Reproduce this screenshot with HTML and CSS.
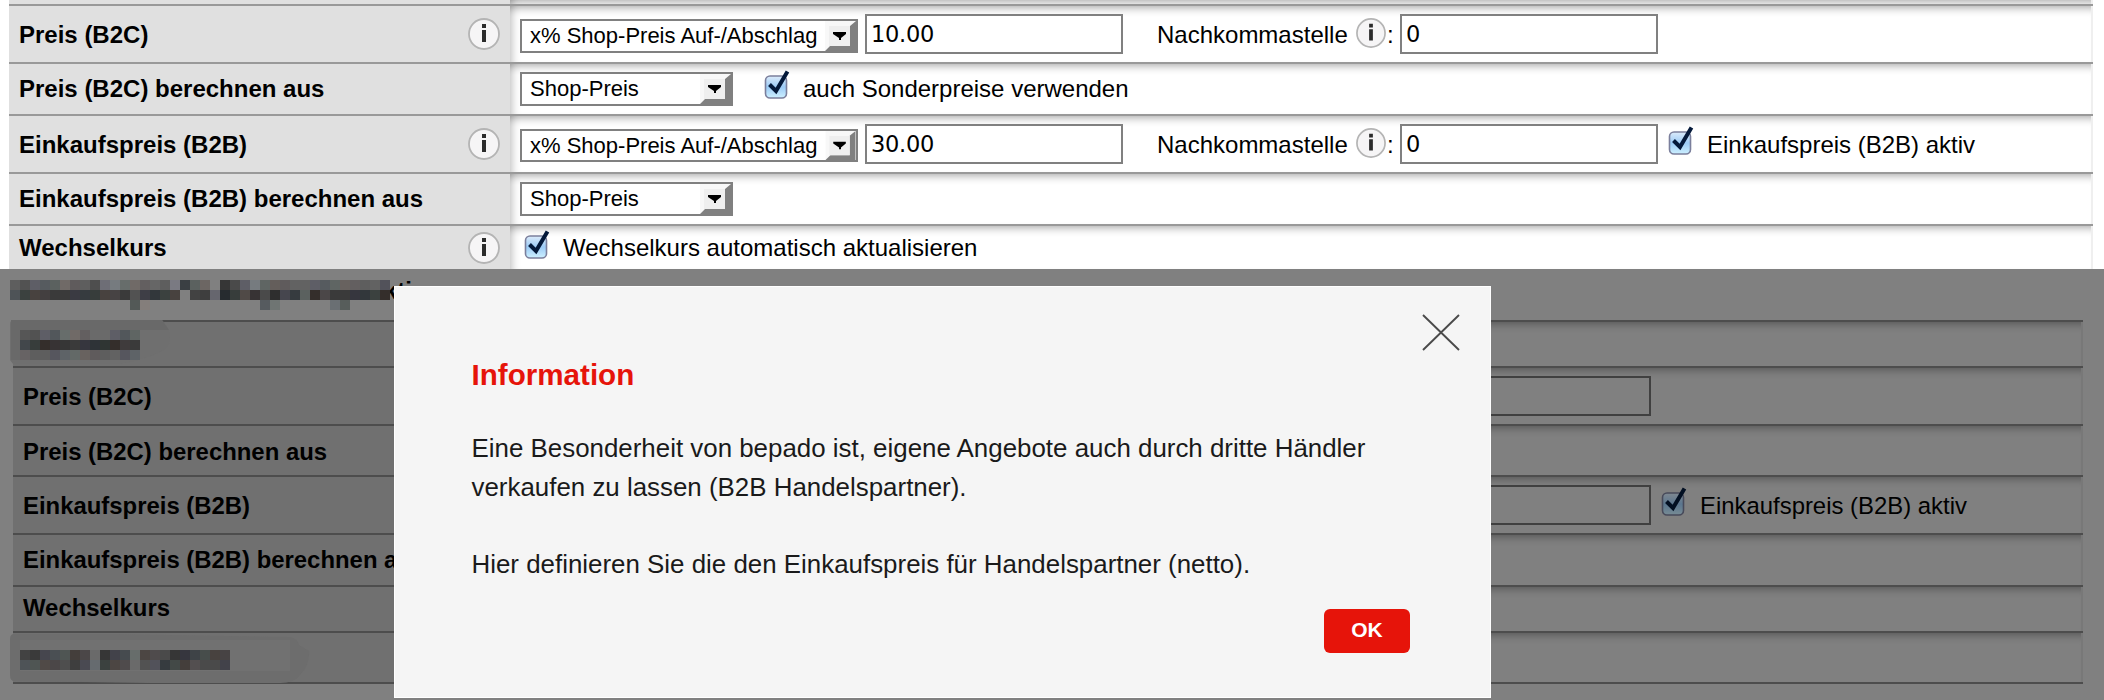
FILE: index.html
```html
<!DOCTYPE html>
<html lang="de">
<head>
<meta charset="utf-8">
<title>Preiseinstellungen</title>
<link rel="stylesheet" href="styles.css">
</head>
<body>
<svg class="defs" width="0" height="0">
  <defs>
    <linearGradient id="cb" x1="0" y1="0" x2="0" y2="1">
      <stop offset="0" stop-color="#dcebfa"/><stop offset=".5" stop-color="#9ccbf6"/><stop offset="1" stop-color="#cdf0ff"/>
    </linearGradient>
    <symbol id="check" viewBox="0 0 27 30">
      <rect x="2.500" y="6" width="21" height="22" rx="4.5" fill="url(#cb)" stroke="#7b7f9c" stroke-width="1.6"/>
      <path d="M6.500 14.500L13 21L24.500 1.500" fill="none" stroke="#04193a" stroke-width="4"/>
    </symbol>
    <symbol id="info" viewBox="0 0 32 32">
      <circle cx="16" cy="16" r="15" fill="#f6f5f6" stroke="#b4b4b4" stroke-width="1.8"/>
      <path d="M14 6h4v4h-4zM14 12h4v12h-4z" fill="#2b2b2b"/>
    </symbol>
    <symbol id="arrow" viewBox="0 0 31 30">
      <path d="M0 0H31L26 5H5V25L0 30Z" fill="#f8f8f8"/>
      <path d="M31 0V30H0L5 25H25V5Z" fill="#808080"/>
      <path d="M4 5H25V25H4Z" fill="#efefef"/>
      <path d="M8 11H21V13L16 17V19H14V17L8 13Z" fill="#000"/>
    </symbol>
  </defs>
</svg>
<main class="page">
  <section class="settings">
    <div class="row r0"><div class="label"></div><div class="cell"></div></div>
    <div class="row r1">
      <div class="label"><span>Preis (B2C)</span><svg class="info"><use href="#info"/></svg></div>
      <div class="cell">
        <div class="select wide"><span>x% Shop-Preis Auf-/Abschlag</span><svg class="arrow"><use href="#arrow"/></svg></div>
        <div class="input first">10.00</div>
        <span class="digits">Nachkommastelle</span><svg class="info cut"><use href="#info"/></svg><span class="colon">:</span>
        <div class="input">0</div>
      </div>
    </div>
    <div class="row r2">
      <div class="label"><span>Preis (B2C) berechnen aus</span></div>
      <div class="cell">
        <div class="select"><span>Shop-Preis</span><svg class="arrow"><use href="#arrow"/></svg></div>
        <svg class="check special"><use href="#check"/></svg><span class="text">auch Sonderpreise verwenden</span>
      </div>
    </div>
    <div class="row r3">
      <div class="label"><span>Einkaufspreis (B2B)</span><svg class="info"><use href="#info"/></svg></div>
      <div class="cell">
        <div class="select wide"><span>x% Shop-Preis Auf-/Abschlag</span><svg class="arrow"><use href="#arrow"/></svg></div>
        <div class="input first">30.00</div>
        <span class="digits">Nachkommastelle</span><svg class="info cut"><use href="#info"/></svg><span class="colon">:</span>
        <div class="input">0</div>
        <svg class="check active"><use href="#check"/></svg><span class="text">Einkaufspreis (B2B) aktiv</span>
      </div>
    </div>
    <div class="row r4">
      <div class="label"><span>Einkaufspreis (B2B) berechnen aus</span></div>
      <div class="cell">
        <div class="select"><span>Shop-Preis</span><svg class="arrow"><use href="#arrow"/></svg></div>
      </div>
    </div>
    <div class="row r5">
      <div class="label"><span>Wechselkurs</span><svg class="info"><use href="#info"/></svg></div>
      <div class="cell"><svg class="check rate"><use href="#check"/></svg><span class="text">Wechselkurs automatisch aktualisieren</span></div>
    </div>
  </section>

  <section class="dimmed">
    <div class="heading"><svg class="mosaic" id="m1" width="380" height="30"></svg><span>kti</span></div>
    <div class="table">
      <div class="row d0"><div class="label"><svg class="mosaic" id="m2" width="170" height="46"><path d="M0 4Q0 0 4 0H152Q164 14 158 26Q150 36 110 44H3L0 40Z" fill="#6f6f6f"/><path d="M1 0H152L159 10H10V40H1Z" fill="#696969"/></svg></div><div class="cell"></div></div>
      <div class="row d1"><div class="label">Preis (B2C)</div><div class="cell"><div class="input"></div></div></div>
      <div class="row d2"><div class="label">Preis (B2C) berechnen aus</div><div class="cell"></div></div>
      <div class="row d3"><div class="label">Einkaufspreis (B2B)</div><div class="cell"><div class="input"></div><svg class="check"><use href="#check"/></svg><span class="text">Einkaufspreis (B2B) aktiv</span></div></div>
      <div class="row d4"><div class="label">Einkaufspreis (B2B) berechnen aus</div><div class="cell"></div></div>
      <div class="row d5"><div class="label">Wechselkurs</div><div class="cell"></div></div>
      <div class="row d6"><div class="label"><svg class="mosaic" id="m3" width="300" height="52"><path d="M0 8Q0 3 4 3H100L280 6Q288 8 289 14L299 20Q300 34 290 44Q284 52 270 52H140L4 50Q0 50 0 44Z" fill="#6d6d6d"/><path d="M10 9H280V40H10Z" fill="#717171"/></svg></div><div class="cell"></div></div>
    </div>
  </section>

  <div class="modal">
    <svg class="close" viewBox="0 0 38 37"><path d="M1 1L37 36M37 1L1 36" stroke="#4a4a4a" stroke-width="1.900" fill="none"/></svg>
    <h2>Information</h2>
    <p>Eine Besonderheit von bepado ist, eigene Angebote auch durch dritte Händler<br>verkaufen zu lassen (B2B Handelspartner).</p>
    <p>Hier definieren Sie die den Einkaufspreis für Handelspartner (netto).</p>
    <button class="ok">OK</button>
  </div>
</main>
<script src="mosaic.js"></script>
</body>
</html>
```
FILE: styles.css
```css
* { box-sizing: border-box; }
body { margin: 0; font-family: "Liberation Sans", Arial, sans-serif; font-size: 24px; line-height: 28px; color: #000; background: #fff; }
.defs { position: absolute; }
.page { position: relative; width: 2104px; height: 700px; overflow: hidden; }
.settings { height: 269px; padding-left: 9px; }
.row { display: flex; }
.settings .row { width: 2084px; border-top: 2px solid #999; }
.settings .r0 { height: 4px; border-top: 0; }
.r1, .r3 { height: 58px; }
.r2, .r4 { height: 52px; }
.r5 { height: 45px; }
.label { width: 501px; flex: none; display: flex; align-items: flex-start; justify-content: space-between; padding: 15px 10px 0 10px; background: #e0e0e0; font-weight: bold; white-space: nowrap; }
.r2 .label, .r4 .label { padding-top: 11px; }
.r5 .label { padding-top: 8px; }
.r0 .label { padding: 0; }
.settings .label .info { margin-top: -3px; }
.settings .r5 .label .info { margin-top: -2px; }
.cell { flex: 1; display: flex; align-items: flex-start; padding-left: 10px; white-space: nowrap; box-shadow: inset 0 10px 9px -8px rgba(0,0,0,.33), inset 9px 0 8px -7px rgba(0,0,0,.25); border-right: 2px solid #efefef; }
.info { width: 32px; height: 32px; flex: none; display: block; }
.select { width: 213px; height: 34px; margin-top: 8px; border: 2px solid #808080; background: #fff; display: flex; justify-content: space-between; font-size: 22px; line-height: 30px; padding-left: 8px; }
.select.wide { width: 338px; margin-top: 13px; }
.select.wide span { line-height: 29px; }
.r3 .select.wide { height: 33px; }
.arrow { width: 31px; height: 30px; flex: none; margin-left: -12px; }
.r3 .select .arrow { height: 29px; }
.input { width: 258px; height: 40px; margin-top: 8px; border: 2px solid #808080; background: #fff; font: 22.500px/36px "DejaVu Sans", Verdana, sans-serif; letter-spacing: -.3px; padding-left: 4px; flex: none; }
.input.first { margin-left: 7px; }
.digits { margin: 15px 0 0 34px; width: 192px; }
.info.cut { height: 30px; margin-top: 12px; margin-left: 6px; overflow: hidden; }
.info.cut use { height: 32px; }
.colon { margin-top: 15px; width: 13px; }
.check { width: 27px; height: 30px; flex: none; }
.check.special { margin: 6px 0 0 30px; }
.r2 .text { margin: 11px 0 0 13px; }
.check.active { margin: 10px 0 0 9px; }
.r3 .text { margin: 15px 0 0 13px; }
.check.rate { margin: 4px 0 0 3px; }
.r5 .text { margin: 8px 0 0 13px; }

.dimmed { height: 431px; background: #808080; padding: 11px 0 0 10px; font-size: 23.900px; }
.heading { height: 40px; display: flex; font-weight: bold; }
.heading span { margin: -3px 0 0 -6px; }
.mosaic { display: block; flex: none; position: relative; }
.table { width: 2070px; margin-left: 3px; border-bottom: 2px solid #4d4d4d; height: 364px; }
.table .row { border-top: 2px solid #4d4d4d; }
.table .label { width: 501px; background: #707070; padding: 15px 10px 0; }
.table .cell { box-shadow: inset 0 10px 9px -8px rgba(0,0,0,.33); border-right: 2px solid #787878; padding-left: 0; }
.table .d0 { height: 46px; }
.table .d1 { height: 58px; }
.table .d2 { height: 51px; }
.table .d3 { height: 58px; }
.table .d4 { height: 52px; }
.table .d5 { height: 46px; }
.table .d6 { height: 51px; }
.table .d0 .label, .table .d6 .label { padding: 0; }
.table .d2 .label { padding-top: 12px; }
.table .d4 .label { padding-top: 11px; }
.table .d5 .label { padding-top: 7px; }
.table .mosaic { margin: -2px 0 0 -3px; }
.table .input { background: #808080; border-color: #404040; margin: 8px 0 0 880px; width: 257px; }
.table .check { filter: brightness(.58); margin: 10px 0 0 9px; }
.table .text { margin: 15px 0 0 13px; }

.modal { position: absolute; left: 394px; top: 286px; width: 1097px; height: 412px; background: #f5f5f5; border: 1px solid #fff; padding: 70px 0 0 76.500px; color: #1a1a1a; }
.close { position: absolute; left: 1027px; top: 27px; width: 38px; height: 37px; }
.modal h2 { margin: 0 0 37px; font-size: 29.600px; line-height: 35px; color: #e6140a; }
.modal p { margin: 0 0 38px; font-size: 25.900px; line-height: 39px; white-space: nowrap; }
.ok { position: absolute; left: 929px; top: 322px; width: 86px; height: 44px; border: 0; border-radius: 6px; background: #e6140a; color: #fff; font: bold 21px "Liberation Sans", Arial, sans-serif; padding: 0 0 3px; }
```
FILE: mosaic.js
```js
// Pixelated strips over the redacted labels: one brightness digit per 10px cell, "." is empty.
const tints = [[0, 0, 0], [6, 0, -3], [-4, 1, 5], [0, 0, 0], [5, 1, 2], [-3, 3, 1], [0, 0, 8]];
function mosaic(id, x0, y0, rows) {
  const svg = document.getElementById(id);
  rows.forEach((row, y) => [...row].forEach((c, x) => {
    if (c === ".") return;
    const v = parseInt(c, 36) * 4 + 22;
    const rgb = tints[(x * 3 + y * 2) % 7].map(t => v + t);
    const r = document.createElementNS("http://www.w3.org/2000/svg", "rect");
    r.setAttribute("x", x0 + x * 10);
    r.setAttribute("y", y0 + y * 10);
    r.setAttribute("width", 10);
    r.setAttribute("height", 10);
    r.setAttribute("fill", `rgb(${rgb})`);
    svg.appendChild(r);
  }));
}
mosaic("m1", 0, 0, [
  "ifihilhiempllikipaik.8dipjihjjihjjiijf",
  "faba99999bb9fa8ab.bak59d7d6c9i6c9988a6",
  "............gq...........hn.....mh...."
]);
mosaic("m2", 10, 10, [
  "gfigllilligj",
  "c96789877 6999h".replace(" ", "").slice(0, 12),
  "jiigjkjhijgj"
]);
mosaic("m3", 10, 19, [
  "b9cefacl8bdlcdd88bdbb",
  "ffdceadlacdlff9caeddb"
]);
```
